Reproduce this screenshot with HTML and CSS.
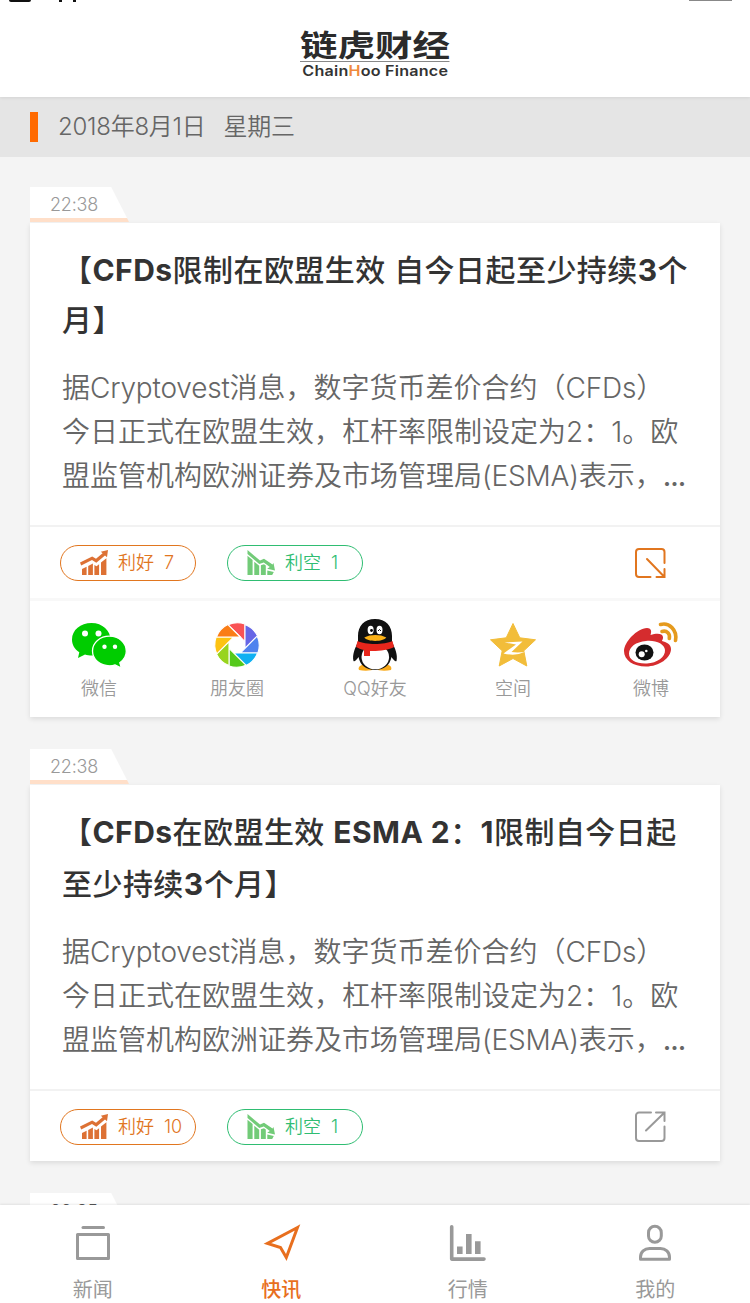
FILE: index.html
```html
<!DOCTYPE html>
<html lang="zh-CN">
<head>
<meta charset="utf-8">
<title>链虎财经</title>
<link rel="stylesheet" href="styles.css">
</head>
<body>
<svg class="defs" width="0" height="0">
  <symbol id="up" viewBox="0 0 28 25">
    <path d="M0 12.600 12.200 6.600 16 8.800 22.600 3.200 20.800 1.800 28 0 27 7.300 25 5.500 16.300 12.800 12 10.100 1.200 15.400Z"/>
    <path d="M2 19 6.600 16.800V25H2ZM8.200 15.900 12.900 13.600V25H8.200ZM14.400 15 16.500 16.300 19.100 14.200V25H14.400ZM21 12.600 26.400 8.300V25H21Z"/>
  </symbol>
  <symbol id="down" viewBox="0 0 28 25">
    <path d="M.5 0 13 10.500 17 8.700 25.500 14.400 26.500 13 28 20.600 20.200 18.800 22.800 17 16.800 12.400 12.200 14 .5 4Z"/>
    <path d="M.5 5.800 5.600 10V25H.5ZM7.300 11.700 12.200 15.700V25H7.300ZM13.900 15.300 17 14.300 18.800 15.600V25H13.900ZM20.300 20.400 26.800 22 25.200 25H20.300Z"/>
  </symbol>
</svg>
<div class="app">
  <header class="header">
    <i class="status s1"></i><i class="status s2"></i><i class="status s3"></i><i class="status s4"></i>
    <div class="logo">
      <div class="logo-cn">链虎财经</div>
      <div class="logo-en">Chain<b>H</b>oo Finance</div>
    </div>
  </header>
  <div class="date"><i></i><span>2018年8月1日</span><span>星期三</span></div>

  <main class="feed">
    <section class="item">
      <div class="tab"><span>22:38</span></div>
      <article class="card">
        <div class="text">
          <h2 class="title">【<b>CFDs</b>限制在欧盟生效 自今日起至少持续<b>3</b>个<br>月】</h2>
          <p class="body">据<span class="en">Cryptovest</span>消息，数字货币差价合约（<span class="en">CFDs</span>）<br>今日正式在欧盟生效，杠杆率限制设定为2：1。欧<br>盟监管机构欧洲证券及市场管理局<span class="en">(ESMA)</span>表示，<span class="dots">...</span></p>
        </div>
        <div class="actions">
          <div class="pill good"><svg width="28" height="25"><use href="#up"/></svg><span>利好</span><span>7</span></div>
          <div class="pill bad"><svg width="28" height="25"><use href="#down"/></svg><span>利空</span><span>1</span></div>
          <svg class="toggle open" width="32" height="32" viewBox="0 0 32 32"><path d="M30.500 16V5a3 3 0 0 0-3-3H5a3 3 0 0 0-3 3v22a3 3 0 0 0 3 3h11.500M13 12 29.500 29M30.500 22v8h-8"/></svg>
        </div>
        <div class="share">
          <div class="ch">
            <svg width="56" height="54" viewBox="0 0 56 54"><path fill="#0c0" d="M20.500 5C9.500 5 1 12 1 21.500c0 5.500 2.600 9.500 7.300 12.700L7 40l7-3.600c2 .6 4.500 1 7 1 10.500 0 18.500-7.300 18.500-16S31.500 5 20.500 5Z"/><path fill="#0c0" stroke="#fff" stroke-width="1.300" d="M38.500 18.200c-9.500 0-17 6.500-17 14.800s7.500 14.800 17 14.800c2 0 4-.3 5.600-.9l6.400 3.300-1.700-5.400c4-2.800 6.500-7 6.500-11.500 0-8.500-7.400-15.100-16.800-15.100Z"/><g fill="#fff"><circle cx="14" cy="15.500" r="3"/><circle cx="27.500" cy="15.500" r="3"/><circle cx="33.500" cy="28.700" r="2.200"/><circle cx="44" cy="28.700" r="2.200"/></g></svg>
            <span>微信</span>
          </div>
          <div class="ch">
            <svg width="54" height="54" viewBox="-27 -27 54 54"><g stroke="#fff" stroke-width="1.100"><path fill="#f95355" d="M8-3.300V-20.900A22.800 22.800 0 0 0-8.900-20.200Z"/><path fill="#6666e6" transform="rotate(45)" d="M8-3.300V-20.900A22.800 22.800 0 0 0-8.900-20.200Z"/><path fill="#4f82ee" transform="rotate(90)" d="M8-3.300V-20.900A22.800 22.800 0 0 0-8.900-20.200Z"/><path fill="#0fb0f2" transform="rotate(135)" d="M8-3.300V-20.900A22.800 22.800 0 0 0-8.900-20.200Z"/><path fill="#55c91c" transform="rotate(180)" d="M8-3.300V-20.900A22.800 22.800 0 0 0-8.900-20.200Z"/><path fill="#98d41d" transform="rotate(225)" d="M8-3.300V-20.900A22.800 22.800 0 0 0-8.900-20.200Z"/><path fill="#fdc312" transform="rotate(270)" d="M8-3.300V-20.900A22.800 22.800 0 0 0-8.900-20.200Z"/><path fill="#fa7d16" transform="rotate(315)" d="M8-3.300V-20.900A22.800 22.800 0 0 0-8.900-20.200Z"/></g></svg>
            <span>朋友圈</span>
          </div>
          <div class="ch">
            <svg width="46" height="54" viewBox="0 0 46 54"><path fill="#faab1b" d="M7 52c-2-4 4-6 9-6h14c6 0 11 2 9 6-5 1-12 1-16-1-4 2-11 2-16 1Z"/><path fill="#111" d="M23 1C12 1 6 8 6 18v6C3 30 0 37 1.500 43c1 1 3-1 5-4C8 47 14 52 23 52s15-5 16.500-13c2 3 4 5 5 4C46 37 43 30 40 24v-6C40 8 34 1 23 1Z"/><ellipse cx="23.300" cy="39" rx="13.800" ry="12.300" fill="#fff"/><path fill="#e8261c" d="M5.500 23c8 4 27 4 35 0l1.500 6c-5 3-17 4.500-24 4v5h-6V32c-3-.6-6-2-8-3Z"/><ellipse cx="18.600" cy="12" rx="3" ry="4.200" fill="#fff"/><ellipse cx="27.500" cy="12" rx="3" ry="4.200" fill="#fff"/><circle cx="19.500" cy="12.500" r="1.400"/><path d="M26 13q1.500-3 3 0" fill="none" stroke="#111"/><path fill="#fbb117" d="M12.300 19.500c6-3.300 16-3.300 22 0-3 4.500-19 4.500-22 0Z"/></svg>
            <span>QQ好友</span>
          </div>
          <div class="ch">
            <svg width="48" height="54" viewBox="0 0 48 54"><path fill="#f2bd3a" stroke="#f2bd3a" stroke-linejoin="round" stroke-width="1" d="m24 5.500 6.800 14.300 15.700 2-11.700 11 3 15.200L24 40.500 10.200 48l3-15.200-11.700-11 15.700-2Z"/><path fill="#fff" d="M15.500 24.500 33.500 23.500 22.500 34Q29 35 36 33.800 27 38.500 14.500 35.500L27 26.500Z"/></svg>
            <span>空间</span>
          </div>
          <div class="ch">
            <svg width="56" height="54" viewBox="0 0 56 54"><path fill="#d52c2e" d="M24 10c4 0 5 3 3.500 7 6-2 12-2 12.500 2 .3 2-1 3-1 4 4 1 9 3 9 8 0 9-12 17.500-25 17.500S1 42 1 33C1 24 14 10.500 24 10Z"/><path fill="#fff" d="M23 23c10-1 18.500 3 19 9 .6 7-8 13-18 13.500C13 46 6 42 6 35.500 6 29 13 23.800 23 23Z"/><ellipse cx="21.500" cy="34.500" rx="9" ry="8" fill="#111"/><circle cx="18.700" cy="36.200" r="3" fill="#fff"/><circle cx="23.300" cy="33" r="1.300" fill="#fff"/><path d="M37.500 6.500C46 4 54.500 12 52.500 22.500M39 13.500c5-1.500 8.300 2.500 7.300 7" fill="none" stroke="#e59a1d" stroke-width="3.600" stroke-linecap="round"/></svg>
            <span>微博</span>
          </div>
        </div>
      </article>
    </section>

    <section class="item">
      <div class="tab"><span>22:38</span></div>
      <article class="card second">
        <div class="text">
          <h2 class="title">【<b>CFDs</b>在欧盟生效 <b>ESMA 2</b>：<b>1</b>限制自今日起<br>至少持续<b>3</b>个月】</h2>
          <p class="body">据<span class="en">Cryptovest</span>消息，数字货币差价合约（<span class="en">CFDs</span>）<br>今日正式在欧盟生效，杠杆率限制设定为2：1。欧<br>盟监管机构欧洲证券及市场管理局<span class="en">(ESMA)</span>表示，<span class="dots">...</span></p>
        </div>
        <div class="actions">
          <div class="pill good"><svg width="28" height="25"><use href="#up"/></svg><span>利好</span><span>10</span></div>
          <div class="pill bad"><svg width="28" height="25"><use href="#down"/></svg><span>利空</span><span>1</span></div>
          <svg class="toggle" width="32" height="32" viewBox="0 0 32 32"><path d="M30.500 15.500V27a3 3 0 0 1-3 3H5a3 3 0 0 1-3-3V4.500a3 3 0 0 1 3-3h12M12 19.500 29.500 2.500M30.500 10V1.500h-8.500"/></svg>
        </div>
      </article>
    </section>

    <section class="item">
      <div class="tab last"><span>22:35</span></div>
    </section>
  </main>

  <nav class="nav">
    <a><svg width="40" height="40" viewBox="0 0 40 40"><path d="M10 4.500h20.500" stroke-linecap="round"/><path d="M4.500 11.500h31v24h-31Z" stroke-linejoin="round"/></svg><span>新闻</span></a>
    <a class="on"><svg width="40" height="40" viewBox="0 0 40 40"><path d="M36.500 4.500 6.500 20.500 19.500 24.500 25.300 34.500Z"/></svg><span>快讯</span></a>
    <a><svg width="40" height="40" viewBox="0 0 40 40"><path d="M3.700 3.700v32.400H36" stroke-width="3.600" stroke-linecap="round" stroke-linejoin="round"/><path d="M11.800 31v-7.500M20.800 31V11M29.800 31V18.300" stroke-width="5.600"/></svg><span>行情</span></a>
    <a><svg width="40" height="40" viewBox="0 0 40 40"><rect x="13.500" y="3.300" width="12.800" height="16" rx="6.400"/><path d="M5.500 36.200V34c0-5 4-8.600 9-8.600h11c5 0 9 3.600 9 8.600v2.200Z" stroke-linejoin="round"/></svg><span>我的</span></a>
  </nav>
</div>
</body>
</html>
```
FILE: styles.css
```css
* { box-sizing: border-box; }
body {
  margin: 0;
  background: #f4f4f4;
  font-family: Inter, "Noto Sans CJK SC", sans-serif;
  font-weight: 350;
  color: #666;
}
.defs { position: absolute; }
.app {
  width: 750px;
  height: 1303px;
  display: flex;
  flex-direction: column;
  overflow: hidden;
}
.header {
  position: relative;
  z-index: 1;
  height: 97px;
  flex: none;
  background: #fff;
  box-shadow: 0 1px 3px rgba(0, 0, 0, .08);
  display: flex;
  justify-content: center;
  padding-top: 27px;
}
.status { position: absolute; top: 0; background: #111; height: 2px; }
.s1 { left: 9px; width: 22px; border-radius: 0 0 6px 6px; }
.s2 { left: 59px; width: 3px; }
.s3 { left: 73px; width: 3px; }
.s4 { left: 689px; width: 43px; height: 1px; background: #888; }
.logo { width: 150px; }
.logo-cn {
  width: 120px;
  height: 34px;
  font: 700 30px/32px "Noto Sans CJK SC", sans-serif;
  transform: scaleX(1.25);
  transform-origin: 0 0;
  white-space: nowrap;
  color: #2b2b2b;
}
.logo-en {
  border-top: 1px solid #888;
  height: 19px;
  padding-left: 2px;
  font: 600 14px/18px Inter, sans-serif;
  letter-spacing: .2px;
  width: 130px;
  transform: scaleX(1.15);
  transform-origin: 0 0;
  white-space: nowrap;
  color: #333;
}
.logo-en b { color: #f08a3c; font-weight: 600; }
.date {
  height: 60px;
  flex: none;
  background: #e5e5e5;
  display: flex;
  align-items: center;
  padding-left: 30px;
  font-size: 24px;
  line-height: 60px;
  letter-spacing: -.25px;
}
.date i { width: 8px; height: 30px; background: #ff6a00; margin-right: 20px; }
.date span + span { margin-left: 18px; }
.feed {
  flex: 1;
  min-height: 0;
  overflow: hidden;
  padding: 30px 30px 0;
  display: flex;
  flex-direction: column;
  gap: 32px;
}
.item { flex: none; }
.tab {
  width: 99px;
  height: 35px;
  margin-bottom: 1px;
  padding-left: 20px;
  background: linear-gradient(#fff 0 31px, #ffdfc9 31px);
  clip-path: polygon(0 0, 82% 0, 98% 31px, 100% 100%, 0 100%);
  font-size: 18px;
  line-height: 36px;
  letter-spacing: -.2px;
  color: #999;
}
.tab.last { color: #555; line-height: 38px; }
.card { background: #fff; box-shadow: 0 2px 5px rgba(0, 0, 0, .1); }
.text { height: 302px; padding: 22px 0 0 32px; white-space: nowrap; }
.title {
  margin: 0 0 21px;
  font-size: 30px;
  line-height: 50px;
  font-weight: 500;
  letter-spacing: .45px;
  color: #333;
}
.title b { font-weight: 750; }
.body { margin: 0; font-size: 28px; line-height: 44px; }
.en { letter-spacing: -.2px; }
.dots { font-weight: 500; letter-spacing: -1px; }
.second .text { height: 304px; padding-top: 21px; }
.second .title { line-height: 52px; margin-bottom: 20px; }
.actions {
  height: 73px;
  border-top: 2px solid #f2f2f2;
  padding: 0 54px 0 30px;
  display: flex;
  align-items: center;
  gap: 31px;
}
.second .actions { height: 72px; padding-top: 1px; }
.pill {
  width: 136px;
  height: 36px;
  border: 1px solid currentColor;
  border-radius: 18px;
  padding-left: 19px;
  display: flex;
  align-items: center;
  gap: 10px;
  font-size: 18px;
  line-height: 34px;
}
.good { color: #e1761f; }
.bad { color: #2fbd72; }
.pill svg { fill: #dd7134; }
.bad svg { fill: #72cb78; }
.toggle { margin-left: auto; fill: none; stroke: #999; stroke-width: 2; stroke-linecap: round; }
.open { stroke: #e1761f; }
.share {
  height: 119px;
  border-top: 3px solid #f8f8f8;
  display: grid;
  grid-template-columns: repeat(5, 1fr);
}
.ch { display: flex; flex-direction: column; align-items: center; padding-top: 17px; }
.ch span { font-size: 18px; line-height: 30px; margin-top: 2px; color: #999; }
.nav {
  position: relative;
  height: 98px;
  flex: none;
  background: #fff;
  box-shadow: 0 -1px 2px rgba(0, 0, 0, .08);
  display: grid;
  grid-template-columns: repeat(4, 1fr);
}
.nav a { display: flex; flex-direction: column; align-items: center; padding: 18px 2px 0 0; color: #999; }
.nav svg { fill: none; stroke: currentColor; stroke-width: 3; }
.nav span { font-size: 20px; line-height: 30px; margin-top: 12px; font-weight: 400; }
.nav .on { color: #e86f1e; padding-right: 0; }
.nav .on span { font-weight: 500; }
```
